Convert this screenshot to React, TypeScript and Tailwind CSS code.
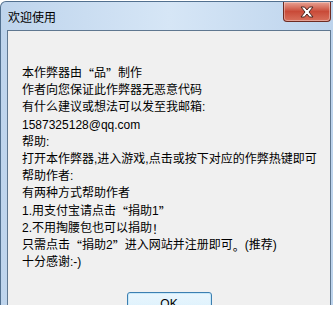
const lines = [
  "本作弊器由“品”制作",
  "作者向您保证此作弊器无恶意代码",
  "有什么建议或想法可以发至我邮箱:",
  "1587325128@qq.com",
  "帮助:",
  "打开本作弊器,进入游戏,点击或按下对应的作弊热键即可",
  "帮助作者:",
  "有两种方式帮助作者",
  "1.用支付宝请点击“捐助1”",
  "2.不用掏腰包也可以捐助！",
  "只需点击“捐助2”进入网站并注册即可。(推荐)",
  "十分感谢:-)",
];

// full-width punctuation needs the CJK face, Liberation draws it narrow
function Line({ text }: { text: string }) {
  const parts = text.split(/([“”！。])/);
  return (
    <div className="h-[17.2px] overflow-visible">
      {parts.map((p, i) =>
        /^[“”！。]$/.test(p) ? (
          <span key={i} style={{ fontFamily: '"Noto Sans CJK SC", sans-serif' }} className="inline-block w-[12px] text-center align-top leading-[17.2px]">
            {p}
          </span>
        ) : (
          <span key={i}>{p}</span>
        )
      )}
    </div>
  );
}

function CloseButton() {
  return (
    <div className="w-[48px] h-[20px] rounded-b-[4px] border border-t-0 border-[#6d2b22] bg-gradient-to-b from-[#e7a294] via-[#c94a38] to-[#d8705c] flex items-center justify-center shadow-[inset_0_0_0_1px_rgba(255,255,255,0.35)]">
      <svg width="16" height="12" viewBox="0 0 16 12">
        <path
          d="M2 1 L5.5 1 L8 4 L10.5 1 L14 1 L10 6 L14 11 L10.5 11 L8 8 L5.5 11 L2 11 L6 6 Z"
          fill="#ffffff"
          stroke="#4a2620"
          strokeWidth="1"
          strokeLinejoin="round"
        />
      </svg>
    </div>
  );
}

export default function App() {
  return (
    <div
      className="w-[333px] h-[318px] bg-white overflow-hidden pt-[1px]"
      style={{ fontFamily: '"Liberation Sans", "Noto Sans CJK SC", sans-serif' }}
    >
      <div className="w-[338px] h-[304px] rounded-tl-[6px] rounded-tr-[6px] border border-b-0 border-[#52708f] bg-gradient-to-r from-[#bed4ec] via-[#d6e6f6] to-[#bcd3ec] flex flex-col px-[6px] overflow-hidden">
        <div className="h-[28px] flex justify-between shrink-0">
          <div className="pl-[1px] pt-[7px] text-[12px] leading-[16px] text-black" style={{ fontFamily: '"Noto Sans CJK SC", sans-serif' }}>
            欢迎使用
          </div>
          <CloseButton />
        </div>
        <div className="flex-1 border border-b-0 border-[#5f7790] bg-[#f0f0f0] flex flex-col overflow-hidden">
          <div className="pl-[14px] pt-[34px] text-[12px] leading-[17.2px] text-black whitespace-nowrap">
            {lines.map((l) => (
              <Line key={l} text={l} />
            ))}
          </div>
          <div className="flex justify-center mt-[21px]">
            <div className="w-[85px] h-[23px] shrink-0 rounded-[3px] border border-[#3c7fb1] bg-gradient-to-b from-[#eaf6fd] to-[#d9f0fc] shadow-[inset_0_0_0_1px_#c8e8f9] flex items-center justify-center text-[12px] text-black">
              OK
            </div>
          </div>
        </div>
      </div>
    </div>
  );
}
